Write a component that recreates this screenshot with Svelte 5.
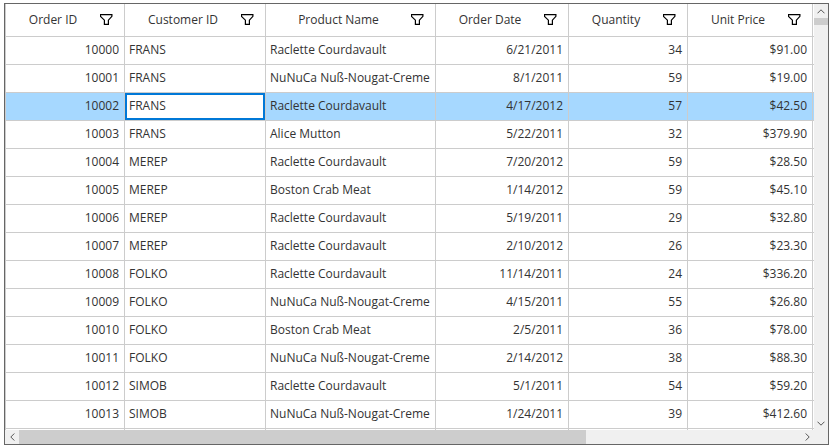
<script>
  const columns = [
    { key: 'id', title: 'Order ID', type: 'number' },
    { key: 'customer', title: 'Customer ID', type: 'text' },
    { key: 'product', title: 'Product Name', type: 'text' },
    { key: 'date', title: 'Order Date', type: 'number' },
    { key: 'quantity', title: 'Quantity', type: 'number' },
    { key: 'price', title: 'Unit Price', type: 'number' }
  ];

  const rows = [
    [10000, 'FRANS', 'Raclette Courdavault', '6/21/2011', 34, 91],
    [10001, 'FRANS', 'NuNuCa Nuß-Nougat-Creme', '8/1/2011', 59, 19],
    [10002, 'FRANS', 'Raclette Courdavault', '4/17/2012', 57, 42.5],
    [10003, 'FRANS', 'Alice Mutton', '5/22/2011', 32, 379.9],
    [10004, 'MEREP', 'Raclette Courdavault', '7/20/2012', 59, 28.5],
    [10005, 'MEREP', 'Boston Crab Meat', '1/14/2012', 59, 45.1],
    [10006, 'MEREP', 'Raclette Courdavault', '5/19/2011', 29, 32.8],
    [10007, 'MEREP', 'Raclette Courdavault', '2/10/2012', 26, 23.3],
    [10008, 'FOLKO', 'Raclette Courdavault', '11/14/2011', 24, 336.2],
    [10009, 'FOLKO', 'NuNuCa Nuß-Nougat-Creme', '4/15/2011', 55, 26.8],
    [10010, 'FOLKO', 'Boston Crab Meat', '2/5/2011', 36, 78],
    [10011, 'FOLKO', 'NuNuCa Nuß-Nougat-Creme', '2/14/2012', 38, 88.3],
    [10012, 'SIMOB', 'Raclette Courdavault', '5/1/2011', 54, 59.2],
    [10013, 'SIMOB', 'NuNuCa Nuß-Nougat-Creme', '1/24/2011', 39, 412.6]
  ];

  let current = $state({ row: 2, col: 1 });
  let thumb = { width: 72.6, height: 1.8 };

  function format(value, index) {
    return columns[index].key === 'price' ? `$${value.toFixed(2)}` : value;
  }
</script>

<div class="grid">
  <div class="viewport">
    <table>
      <colgroup>
        {#each columns as column}
          <col class={column.key} />
        {/each}
        <col class="rest" />
      </colgroup>
      <thead>
        <tr>
          {#each columns as column}
            <th scope="col">
              <div class="head">
                <span class="title">{column.title}</span>
                <button class="filter" aria-label={`Filter ${column.title}`}>
                  <svg width="13" height="12" viewBox="0 0 13 12" aria-hidden="true">
                    <path d="M.5 .6H11.9V2.3L8.4 6.2V10.4H4.4V6.2L.5 2.3Z" fill="none" stroke="#000" stroke-width="1.2" />
                  </svg>
                </button>
              </div>
            </th>
          {/each}
          <td></td>
        </tr>
      </thead>
      <tbody>
        {#each rows as row, r}
          <tr class:selected={r === current.row}>
            {#each row as value, c}
              <td
                class={columns[c].type}
                class:current={r === current.row && c === current.col}
                onclick={() => (current = { row: r, col: c })}>{format(value, c)}</td>
            {/each}
            <td></td>
          </tr>
        {/each}
        <tr>
          {#each columns as column}
            <td></td>
          {/each}
          <td></td>
        </tr>
      </tbody>
    </table>
  </div>

  <div class="bar vertical">
    <button aria-label="Scroll up">
      <svg width="8" height="5" viewBox="0 0 8 5"><path d="M.5 4.3L4 .8L7.5 4.3" /></svg>
    </button>
    <div class="track"><div class="thumb" style={`height: ${thumb.height}%`}></div></div>
    <button aria-label="Scroll down">
      <svg width="8" height="5" viewBox="0 0 8 5"><path d="M.5 .7L4 4.2L7.5 .7" /></svg>
    </button>
  </div>

  <div class="bar horizontal">
    <button aria-label="Scroll left">
      <svg width="5" height="8" viewBox="0 0 5 8"><path d="M4.3 .5L.8 4L4.3 7.5" /></svg>
    </button>
    <div class="track"><div class="thumb" style={`width: ${thumb.width}%`}></div></div>
    <button aria-label="Scroll right">
      <svg width="5" height="8" viewBox="0 0 5 8"><path d="M.7 .5L4.2 4L.7 7.5" /></svg>
    </button>
  </div>
  <div class="corner"></div>
</div>

<style>
  :global(body) {
    margin: 0;
    background: #fff;
  }

  .grid {
    display: grid;
    grid-template-columns: minmax(0, 1fr) 14px;
    grid-template-rows: minmax(0, 1fr) 14px;
    box-sizing: border-box;
    height: calc(100vh - 6px);
    margin: 3px 2px 3px 4px;
    border: 1px solid #666;
    font-family: "Segoe UI", "Open Sans", sans-serif;
    font-size: 12px;
    line-height: 16px;
    color: #333;
  }

  .viewport {
    overflow: hidden;
  }

  table {
    width: 100%;
    table-layout: fixed;
    border-collapse: separate;
    border-spacing: 0;
    border-left: 1px solid #ccc;
  }

  col.id,
  col.quantity {
    width: 119px;
  }
  col.customer {
    width: 141px;
  }
  col.date {
    width: 133px;
  }
  col.price {
    width: 125px;
  }
  col.rest {
    width: 1px;
  }

  th,
  td {
    box-sizing: border-box;
    height: 28px;
    padding: 0 4px 2px;
    border-right: 1px solid #ccc;
    border-bottom: 1px solid #ccc;
    font-weight: normal;
    white-space: nowrap;
    overflow: hidden;
  }
  th {
    height: 33px;
    padding: 0;
  }
  td:last-child {
    padding: 0;
    border-right: 0;
  }
  .number {
    padding-right: 5px;
    text-align: right;
  }
  .selected td {
    background: #a6d8ff;
  }
  .selected td.current {
    background: #fff;
    box-shadow: inset 0 0 0 2px #0078d7;
  }

  .head {
    display: flex;
    align-items: center;
  }
  .title {
    flex: 1;
    text-align: center;
  }

  button {
    display: flex;
    align-items: center;
    justify-content: center;
    padding: 0;
    border: 0;
    background: none;
  }
  .filter {
    margin-right: 11px;
  }

  .bar {
    display: flex;
    background: #f0f0f0;
  }
  .vertical {
    flex-direction: column;
  }
  .bar button {
    flex: none;
    width: 14px;
    height: 14px;
  }
  .bar path {
    fill: none;
    stroke: #555;
  }
  .track {
    flex: 1;
  }
  .thumb {
    background: #cdcdcd;
  }
  .horizontal .thumb {
    height: 100%;
  }
  .corner {
    background: #f0f0f0;
  }
</style>
